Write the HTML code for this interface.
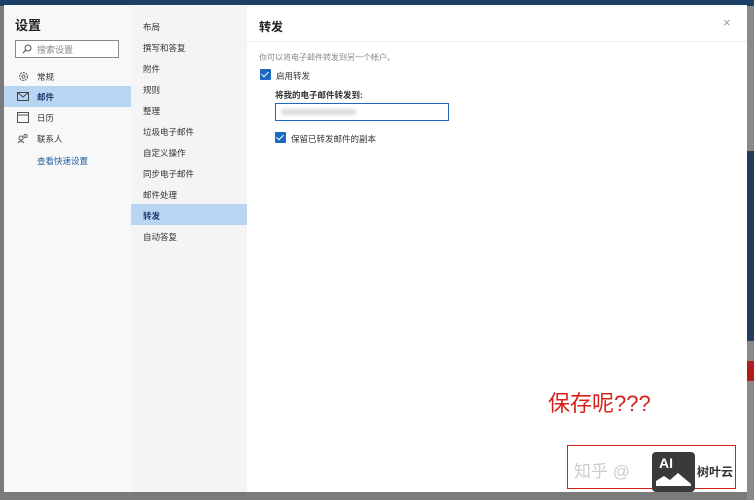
<!DOCTYPE html>
<html><head><meta charset="utf-8"><style>
*{margin:0;padding:0;box-sizing:border-box}
body{width:754px;height:500px;overflow:hidden;background:#7a7a7a;font-family:"Liberation Sans","Noto Sans CJK SC",sans-serif;position:relative;color:#333}
.abs{position:absolute}
.top{left:0;top:0;width:754px;height:6px;background:#1c3f66}
.right{left:747px;top:6px;width:7px;height:494px;background:#8a8a8a}
.dlg{left:4px;top:5px;width:743px;height:487px;background:#fff}
.nav{left:0;top:0;width:127px;height:487px;background:#f8f8f8}
.sub{left:127px;top:0;width:116px;height:487px;background:#f4f4f4}
.t{position:absolute;font-size:8.5px;white-space:nowrap}
.sel{position:absolute;background:#b8d6f4}
.cb{position:absolute;width:11px;height:11px;background:#1b6ac0;border-radius:1px}
.cb:after{content:"";position:absolute;left:3px;top:1px;width:3px;height:6px;border:solid #fff;border-width:0 1.3px 1.3px 0;transform:rotate(45deg)}
</style></head><body>
<div class="abs top"></div>
<div class="abs right">
 <div class="abs" style="left:0;top:145px;width:7px;height:190px;background:#233a5c"></div>
 <div class="abs" style="left:0;top:355px;width:7px;height:20px;background:#b01c1c"></div>
</div>
<div class="abs dlg">
 <div class="abs nav">
  <div class="t" style="left:11px;top:10px;font-size:13px;font-weight:bold;color:#222">设置</div>
  <div class="abs" style="left:11px;top:35px;width:104px;height:18px;border:1px solid #8a8a8a;background:#fff"></div>
  <svg class="abs" style="left:18px;top:39px" width="10" height="10" viewBox="0 0 10 10"><circle cx="6" cy="4" r="3" fill="none" stroke="#555" stroke-width="1"/><path d="M4 6L1 9" stroke="#555" stroke-width="1.2"/></svg>
  <div class="t" style="left:33px;top:38px;font-size:9px;color:#888">搜索设置</div>
  <svg class="abs" style="left:14px;top:66px" width="11" height="11" viewBox="0 0 11 11"><circle cx="5.5" cy="5.5" r="4" fill="none" stroke="#666" stroke-width="1.2" stroke-dasharray="2 1"/><circle cx="5.5" cy="5.5" r="1.6" fill="none" stroke="#666"/></svg>
  <div class="t" style="left:33px;top:66px">常规</div>
  <div class="sel" style="left:0;top:81px;width:127px;height:21px"></div>
  <svg class="abs" style="left:13px;top:87px" width="12" height="9" viewBox="0 0 12 9"><rect x=".5" y=".5" width="11" height="8" fill="none" stroke="#444"/><path d="M.5 .5L6 5L11.5 .5" fill="none" stroke="#444"/></svg>
  <div class="t" style="left:33px;top:86px;font-weight:bold;color:#1e3f6e">邮件</div>
  <svg class="abs" style="left:13px;top:107px" width="12" height="11" viewBox="0 0 12 11"><rect x=".5" y=".5" width="11" height="10" fill="none" stroke="#555"/><path d="M.5 3H11.5" stroke="#555"/></svg>
  <div class="t" style="left:33px;top:107px">日历</div>
  <svg class="abs" style="left:13px;top:128px" width="12" height="11" viewBox="0 0 12 11"><circle cx="4" cy="5" r="2" fill="none" stroke="#555"/><path d="M1 10Q4 6 7 10" fill="none" stroke="#555"/><circle cx="8.5" cy="3" r="1.6" fill="none" stroke="#555"/></svg>
  <div class="t" style="left:33px;top:128px">联系人</div>
  <div class="t" style="left:33px;top:150px;color:#1e5fa0">查看快速设置</div>
 </div>
 <div class="abs sub">
  <div class="t" style="left:12px;top:16px">布局</div>
  <div class="t" style="left:12px;top:37px">撰写和答复</div>
  <div class="t" style="left:12px;top:58px">附件</div>
  <div class="t" style="left:12px;top:79px">规则</div>
  <div class="t" style="left:12px;top:100px">整理</div>
  <div class="t" style="left:12px;top:121px">垃圾电子邮件</div>
  <div class="t" style="left:12px;top:142px">自定义操作</div>
  <div class="t" style="left:12px;top:163px">同步电子邮件</div>
  <div class="t" style="left:12px;top:184px">邮件处理</div>
  <div class="sel" style="left:0;top:199px;width:116px;height:21px"></div>
  <div class="t" style="left:12px;top:205px;font-weight:bold;color:#1e3f6e">转发</div>
  <div class="t" style="left:12px;top:226px">自动答复</div>
 </div>
 <div class="t" style="left:255px;top:13px;font-size:12px;font-weight:bold;color:#222">转发</div>
 <div class="t" style="left:719px;top:10px;font-size:13px;color:#999">×</div>
 <div class="abs" style="left:243px;top:36px;width:500px;height:1px;background:#eee"></div>
 <div class="t" style="left:255px;top:47px;font-size:8px;color:#888">你可以将电子邮件转发到另一个帐户。</div>
 <div class="cb" style="left:256px;top:64px"></div>
 <div class="t" style="left:272px;top:65px">启用转发</div>
 <div class="t" style="left:271px;top:84px;font-weight:bold">将我的电子邮件转发到:</div>
 <div class="abs" style="left:271px;top:98px;width:174px;height:18px;border:1.5px solid #1b6ac0;background:#fff"></div>
 <div class="abs" style="left:277px;top:104px;width:75px;height:6px;background:#ddd;border-radius:3px;filter:blur(1.5px)"></div>
 <div class="cb" style="left:271px;top:127px"></div>
 <div class="t" style="left:287px;top:128px">保留已转发邮件的副本</div>
 <div class="t" style="left:544px;top:381px;font-size:22px;color:#d8201a">保存呢???</div>
 <div class="abs" style="left:563px;top:440px;width:169px;height:44px;border:1.5px solid #d8201a"></div>
 <div class="t" style="left:570px;top:452px;font-size:17px;color:#ccc">知乎 @</div>
 <div class="abs" style="left:648px;top:447px;width:43px;height:40px;background:#3a3a3a;border-radius:4px;color:#fff;font-weight:bold;font-size:14px;padding:3px 0 0 7px">AI<svg class="abs" style="left:4px;top:20px" width="35" height="14" viewBox="0 0 35 14"><path d="M0 14V9L8 4L14 8L22 1L35 12V14Z" fill="#fff"/></svg></div>
 <div class="t" style="left:693px;top:458px;font-size:12px;font-weight:bold;color:#333">树叶云</div>
</div>
</body></html>
